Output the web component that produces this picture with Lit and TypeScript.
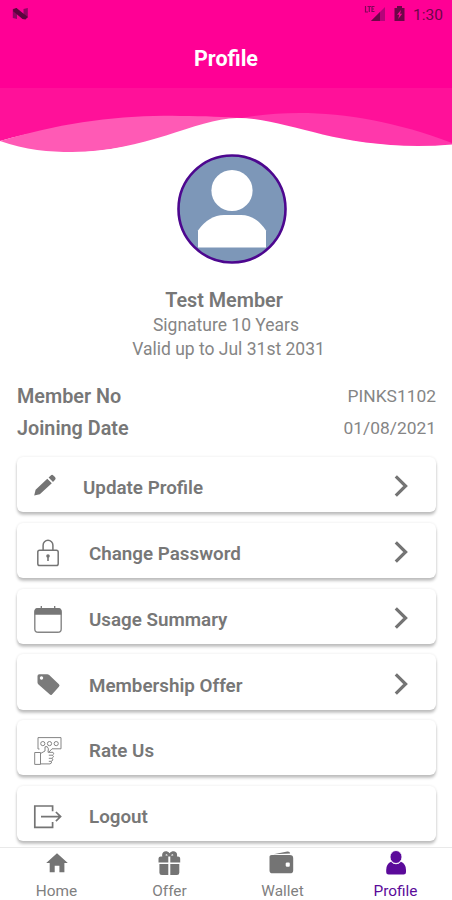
import { LitElement, html, css, svg } from "lit";
import { customElement } from "lit/decorators.js";

const menuIcons = {
  pencil: svg`<path fill="#747474" d="M4.2 26.4 L5.6 20.8 L17.3 9.7 L21.8 14.2 L9.8 25.2 Z M18.6 8.5 L20.8 6.4 Q22.1 5.2 23.3 6.4 L25 8.1 Q26.3 9.5 25.1 10.8 L23 13 Z"/>`,
  lock: svg`<g fill="none" stroke="#747474" stroke-width="1.5"><rect x="7.8" y="15.2" width="20.4" height="15.4" rx="1.8"/><path d="M13.1 15 V10.2 a4.9 4.9 0 0 1 9.8 0 V15"/></g><circle cx="18" cy="21" r="1.8" fill="#747474"/><path d="M18 21 V26" stroke="#747474" stroke-width="1.6"/>`,
  calendar: svg`<rect x="4.8" y="7.7" width="26.4" height="23.6" rx="3.4" fill="none" stroke="#858585" stroke-width="1.4"/><path fill="#777" d="M4.6 13.7 V10.5 Q4.6 7.1 8 7.1 H28 Q31.4 7.1 31.4 10.5 V13.7 Z"/><path d="M11.3 4.9 V8.5 M24.7 4.9 V8.5" stroke="#777" stroke-width="1.3"/>`,
  tag: svg`<g transform="translate(0 1)"><path fill="#7b7b7b" fill-rule="evenodd" d="M7.5 8 Q7.5 6.2 9.3 6.2 L17.3 6.3 Q18.3 6.3 19.2 7.1 L28.9 16.2 Q30.2 17.5 28.9 18.8 L22 26.4 Q20.9 27.6 19.6 26.3 L8.5 16.6 Q7.5 15.7 7.5 14.5 Z M11.5 8.3 a1.7 1.7 0 1 0 .01 0 Z"/></g>`,
  rate: svg`<g fill="none" stroke="#858585" stroke-width="1" transform="translate(0 1)"><path d="M9.5 16 H8 V4.6 H31 V15.8 H22 L19 19"/><circle cx="12.8" cy="10.6" r="2.1"/><circle cx="19.5" cy="10.6" r="2.1"/><circle cx="26.2" cy="10.6" r="2.1"/><path d="M10.5 19.5 H4.7 V31.4 H10.5 Z M10.5 20.5 L15 18 V13.8 Q17.7 12.5 18.4 15.8 L18 19.3 H23 Q25 20.8 22.4 22.2 Q25 23.7 22 25.3 Q24.4 27 21.2 28.3 Q22.4 30.3 20 30.9 H10.5 M18.8 22.2 H22.4 M18.8 25.3 H22 M18.8 28.3 H21.2"/></g>`,
  logout: svg`<g fill="none" stroke="#747474" stroke-width="1.7" transform="translate(0 .7)"><path d="M22.6 12.5 V7.3 H4.8 V28.7 H22.6 V23.2 M11 17.9 H30.5 M25.9 13.3 L30.6 17.9 L25.9 22.5"/></g>`,
};

const tabIcons = {
  home: svg`<path fill="#747474" d="M14 3.3 L24.8 12.9 H21.4 V22.3 H16.4 V15.8 H11.7 V22.3 H6.7 V12.9 H3.2 Z"/>`,
  gift: svg`<g fill="#747474"><path fill-rule="evenodd" d="M4.7 6.4 H6.3 C5 1.6 10.4 -.5 13.6 3.2 C16.8 -.5 22.3 1.6 20.9 6.4 H22 Q24.2 6.4 24.2 8.4 V12.4 H14.3 V6.4 H12.3 V12.4 H2.5 V8.4 Q2.5 6.4 4.7 6.4 Z M9.6 5.5 H11.8 C11.2 4.1 9.4 3.9 9.6 5.5 Z M15 5.5 H17.2 C17.6 3.9 15.6 4.1 15 5.5 Z"/><path d="M3.4 14 H12.3 V25 H5.8 Q3.4 25 3.4 22.7 Z M14.3 14 H23.3 V22.7 Q23.3 25 20.9 25 H14.3 Z"/></g>`,
  wallet: svg`<path fill="#747474" d="M4.5 4.2 L18.3 1.6 Q20.8 1.2 21.2 3.4 Z"/><path fill="#747474" fill-rule="evenodd" d="M2.6 5 H20.8 Q24.2 5 24.2 8.2 V20.4 Q24.2 23.3 20.8 23.3 H3.8 Q.5 23.3 .5 20.4 V6.5 Q.5 5 2.6 5 Z M18 12.6 H19.8 Q20.8 12.6 20.8 13.6 V15.6 Q20.8 16.8 19.8 16.8 H18 Q16.7 16.8 16.7 15.6 V13.6 Q16.7 12.6 18 12.6 Z"/>`,
  person: svg`<g fill="#5b0a9a"><path d="M9 11.8 Q14 16.8 19 11.8 Q24 14 24 20 V22.3 Q24 24.6 21.6 24.6 H6.6 Q4.2 24.6 4.2 22.3 V20 Q4.2 14 9 11.8 Z"/><ellipse cx="14" cy="7" rx="6" ry="6.5" stroke="#fff" stroke-width=".9"/></g>`,
};

const items = [
  { label: "Update Profile", icon: menuIcons.pencil, arrow: true, near: true },
  { label: "Change Password", icon: menuIcons.lock, arrow: true },
  { label: "Usage Summary", icon: menuIcons.calendar, arrow: true },
  { label: "Membership Offer", icon: menuIcons.tag, arrow: true },
  { label: "Rate Us", icon: menuIcons.rate },
  { label: "Logout", icon: menuIcons.logout },
];

const tabs = [
  { label: "Home", icon: tabIcons.home },
  { label: "Offer", icon: tabIcons.gift },
  { label: "Wallet", icon: tabIcons.wallet },
  { label: "Profile", icon: tabIcons.person, active: true },
];

@customElement("app-root")
class AppRoot extends LitElement {
  static styles = css`
    :host { display: flex; flex-direction: column; width: 452px; height: 900px; overflow: hidden; background: #fff; color: #777; font-family: Roboto, sans-serif; }
    * { box-sizing: border-box; }
    svg { display: block; flex: none; }
    .header { height: 88px; flex: none; background: #ff0095; }
    .status { height: 28px; display: flex; align-items: center; justify-content: space-between; padding: 0 9px 0 12px; color: #6d0648; }
    .signals { display: flex; align-items: center; }
    .clock { font-size: 15.5px; line-height: 28px; width: 30px; margin-left: 3px; padding-top: 1px; white-space: nowrap; }
    .title { margin: 0; text-align: center; color: #fff; font-size: 21.5px; line-height: 26px; font-weight: 700; padding-top: 18px; }
    .wave { height: 66px; }
    .person { display: flex; flex-direction: column; align-items: center; height: 227px; flex: none; }
    .avatar { margin-left: 12px; }
    .name { margin: 25px 4px 0 0; font-size: 19.8px; line-height: 24px; font-weight: 600; }
    .plan { font-size: 17.5px; line-height: 25px; color: #858585; }
    .valid { margin-left: 5px; font-size: 17.5px; line-height: 23px; color: #858585; }
    .facts { display: grid; gap: 8px; padding: 3px 16px 0 17px; height: 76px; flex: none; align-content: start; }
    .fact { display: flex; justify-content: space-between; line-height: 24px; }
    .key { font-size: 19.8px; font-weight: 600; padding-top: 1px; margin-bottom: -1px; }
    .value { font-size: 17.4px; color: #858585; }
    .menu { display: flex; flex-direction: column; gap: 10.5px; padding: 0 16px 0 17px; flex: 1; min-height: 0; }
    .card { height: 55.3px; flex: none; border-radius: 6px; background: #fff; box-shadow: 0 3px 3px rgba(0,0,0,.23), 0 0 3px rgba(0,0,0,.09); display: flex; align-items: center; padding: 3px 25px 0 13px; }
    .label { margin-left: 23px; padding-top: 4px; font-size: 18.8px; line-height: 24px; font-weight: 600; flex: 1; }
    .icon { margin-top: 2px; }
    .near { margin-left: 17px; }
    .tabs { height: 53px; flex: none; background: #fff; border-top: 1px solid #e9e9e9; display: grid; grid-template-columns: repeat(4, 1fr); position: relative; }
    .tab { display: flex; flex-direction: column; align-items: center; padding-top: 2px; font-size: 15.4px; line-height: 20px; color: #808080; }
    .tab svg { margin-bottom: 5px; }
    .tab.active { color: #5b0a9a; }
  `;

  render() {
    return html`
      <header class="header">
        <div class="status">
          <svg width="18" height="14" viewBox="0 0 18 14"><path fill="#8f0562" d="M.8 2 L5 1 V12 L.8 11 Z M11.5 2 L15.8 1 V10.5 L11.5 12 Z"/><path fill="#5a063d" d="M1 2.5 L4.5 1 L15.8 10 L13.5 12.5 L10.5 12 L1.5 4.5 Z"/></svg>
          <span class="signals">
            <svg width="50" height="20" viewBox="0 0 50 20"><path fill="#b5047a" d="M11 17 L25 3 V17 Z"/><path fill="#6d0648" d="M11 17 L20 8 V17 Z"/><path fill="none" stroke="#81055a" stroke-width="1.2" d="M5.5 2 V8 H8 M7.5 2.5 H11 M9.3 2.5 V8 M14.5 2.5 H12 V7.5 H14.5 M12 5 H14"/><path fill="#6d0648" fill-rule="evenodd" d="M37 2 H42 V4 H44.5 V17 H34.5 V4 H37 Z M41 6 L37 10.8 H39.2 L38.2 15 L42.2 9.7 H40 Z"/></svg>
            <span class="clock">1:30</span>
          </span>
        </div>
        <h1 class="title">Profile</h1>
      </header>
      <svg class="wave" width="452" height="66" viewBox="0 0 452 66">
        <path fill="#ff1199" d="M0 0 H452 V57 C335 64 280 30 235 30 C170 30 60 35 0 53 Z"/>
        <path fill="#ff5ab5" d="M0 53 C60 35 122 26 180 28 C205 28 225 29 242 30 C205 33 145 64 72 64 C50 64 25 62 0 53 Z"/>
        <path fill="#ff38ab" d="M242 30 C300 19 375 25 452 55 V57 C350 64 310 38 242 30 Z"/>
        <path fill="#fff" d="M72 64 C145 64 195 31 237 30 C285 30 330 58 418 58 Q435 58 452 56.5 V66 H72 Z"/>
      </svg>
      <section class="person">
        <svg class="avatar" width="110" height="110" viewBox="0 0 110 110"><circle cx="55" cy="55" r="53.5" fill="#7d97b8" stroke="#4d078f" stroke-width="2.6"/><circle cx="55" cy="36.5" r="20.6" fill="#fff"/><path fill="#fff" d="M21 93.5 V76.5 Q32 61 47 61 H64 Q79 61 89 76.5 V93.5 Z"/></svg>
        <div class="name">Test Member</div>
        <div class="plan">Signature 10 Years</div>
        <div class="valid">Valid up to Jul 31st 2031</div>
      </section>
      <section class="facts">
        <div class="fact"><span class="key">Member No</span><span class="value">PINKS1102</span></div>
        <div class="fact"><span class="key">Joining Date</span><span class="value">01/08/2021</span></div>
      </section>
      <main class="menu">
        ${items.map((i) => html`<div class="card">
          <svg class="icon" width="36" height="36" viewBox="0 0 36 36">${i.icon}</svg>
          <span class="label ${i.near ? "near" : ""}">${i.label}</span>
          ${i.arrow ? html`<svg width="20" height="24" viewBox="0 0 20 24"><path d="M4.8 2.4 L14.6 12 L4.8 21.6" fill="none" stroke="#747474" stroke-width="3.2"/></svg>` : ""}
        </div>`)}
      </main>
      <nav class="tabs">
        ${tabs.map((t) => html`<div class="tab ${t.active ? "active" : ""}"><svg width="28" height="26" viewBox="0 0 28 26">${t.icon}</svg><span>${t.label}</span></div>`)}
      </nav>`;
  }
}
